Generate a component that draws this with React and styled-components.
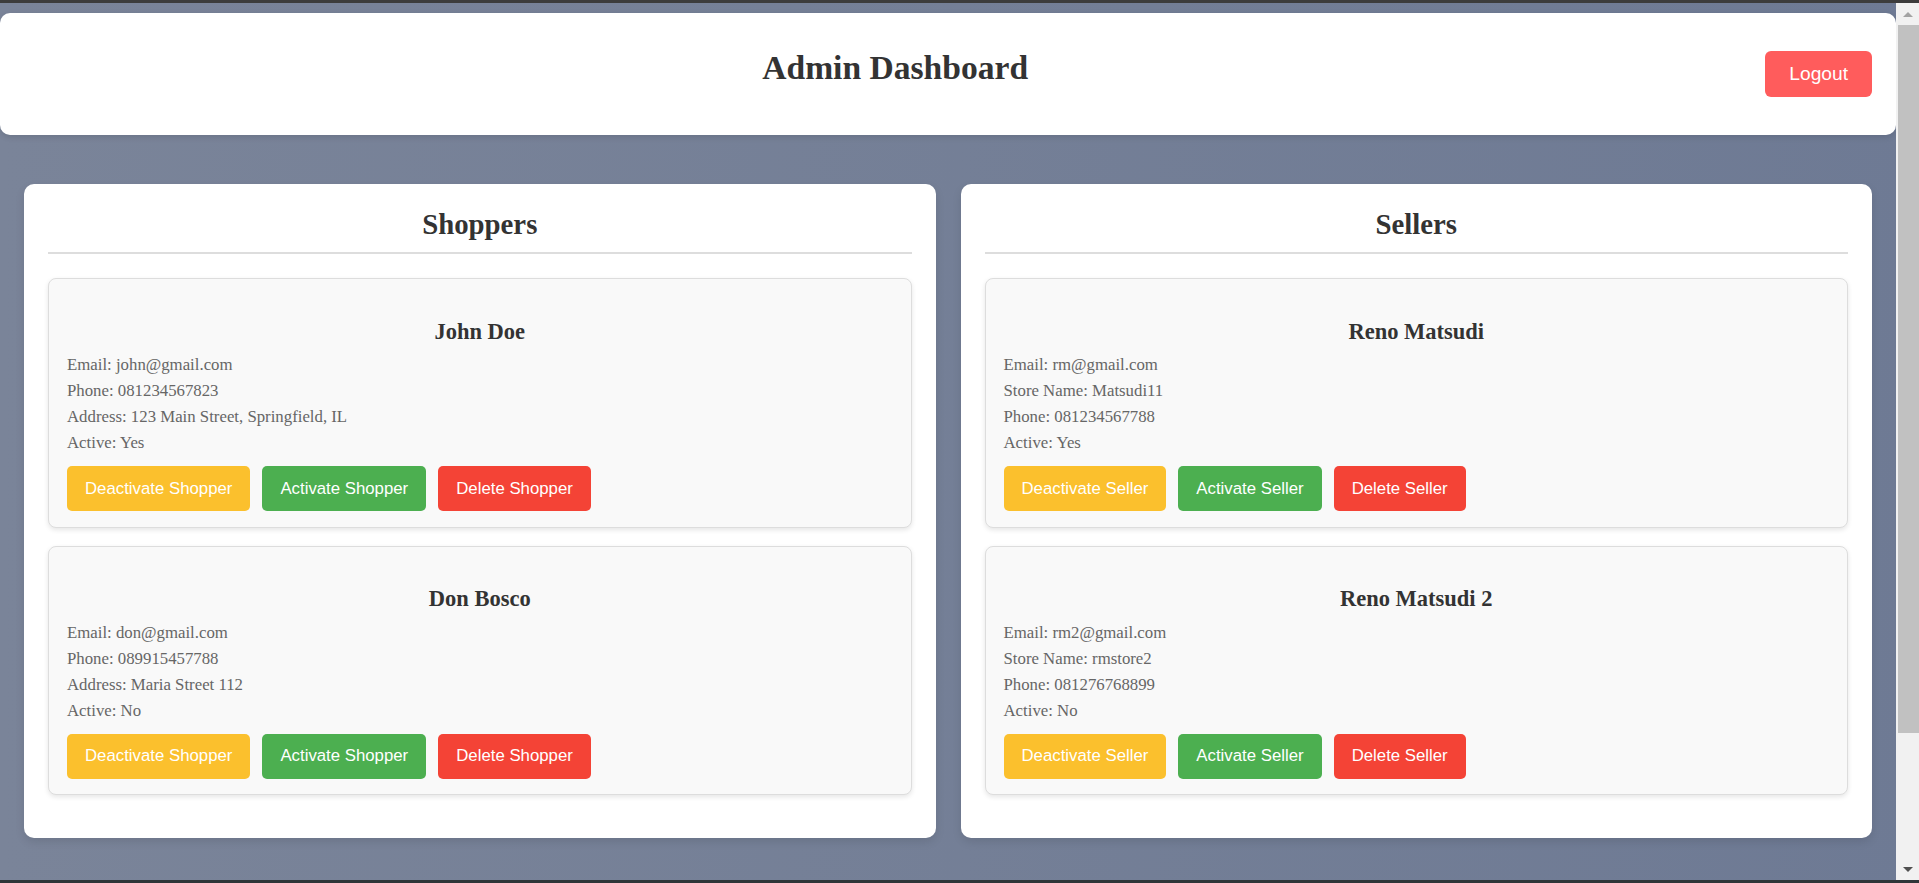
import styled, { createGlobalStyle } from "styled-components";

const GlobalStyle = createGlobalStyle`
  * {
    box-sizing: border-box;
  }

  body {
    margin: 0;
    border-top: 3px solid #3c3c3c;
    font-family: "Liberation Serif", "Times New Roman", serif;
    background: linear-gradient(to right, #7a8499, #6e7a94);
  }
`;

// the browser's own scrollbar is hidden in the capture, so draw the one from the screenshot
const ScrollTrack = styled.div`
  position: fixed;
  top: 3px;
  right: 0;
  bottom: 3px;
  width: 23px;
  display: flex;
  flex-direction: column;
  background: #f1f1f1;
`;

const ScrollArrow = styled.div`
  height: 22px;
  display: flex;
  align-items: center;
  justify-content: center;

  &::before {
    content: "";
    border-left: 5px solid transparent;
    border-right: 5px solid transparent;
    ${(p) =>
      p.$down
        ? "border-top: 5px solid #505050;"
        : "border-bottom: 5px solid #a3a3a3;"}
  }
`;

const ScrollThumb = styled.div`
  height: 708px;
  margin-left: 2px;
  background: #c1c1c1;
`;

const ScrollRest = styled.div`
  flex: 1;
`;

const WindowEdge = styled.div`
  position: fixed;
  left: 0;
  right: 0;
  bottom: 0;
  height: 3px;
  background: #2f3538;
`;

const Page = styled.div`
  min-height: 1060px;
  margin-right: 23px;
  padding-top: 10px;
`;

const Header = styled.header`
  display: flex;
  align-items: center;
  padding: 20px 24px 20px 25px;
  background: white;
  border-radius: 10px;
  box-shadow: 0 2px 6px rgba(0, 0, 0, 0.12);
`;

const Title = styled.h1`
  flex: 1;
  margin: 16px 0 28px;
  text-align: center;
  font-size: 33.6px;
  font-weight: bold;
  color: #333;
`;

const LogoutButton = styled.button`
  padding: 12px 24px;
  border: none;
  border-radius: 6px;
  background-color: #ff5c5c;
  color: white;
  font-family: "Liberation Sans", Arial, sans-serif;
  font-size: 19.2px;
  cursor: pointer;
`;

const Columns = styled.main`
  display: grid;
  grid-template-columns: 1fr 1fr;
  gap: 25px;
  padding: 49px 24px 24px;
`;

const Panel = styled.section`
  padding: 24px 24px 25px;
  background: white;
  border-radius: 10px;
  box-shadow: 0 4px 10px rgba(0, 0, 0, 0.1);
`;

const PanelTitle = styled.h2`
  margin: 0 0 24px;
  padding-bottom: 11px;
  border-bottom: 2px solid #ddd;
  text-align: center;
  font-size: 28.8px;
  color: #333;
`;

const Card = styled.div`
  margin-bottom: 18px;
  padding: 18px 18px 15.5px;
  background: #f9f9f9;
  border: 1px solid #ddd;
  border-radius: 8px;
  box-shadow: 0 2px 5px rgba(0, 0, 0, 0.1);
`;

const Name = styled.h3`
  margin: 21.5px 0 10.5px;
  text-align: center;
  font-size: 22.5px;
  color: #333;
`;

const Info = styled.p`
  margin: 0 0 6px;
  font-size: 16.8px;
  line-height: 20px;
  color: #666;
`;

const Actions = styled.div`
  display: flex;
  gap: 12px;
  margin-top: 13px;
`;

const colors = {
  deactivate: "#fbc02d",
  activate: "#4caf50",
  delete: "#f44336",
};

const ActionButton = styled.button`
  padding: 12.6px 18px;
  border: none;
  border-radius: 5px;
  background-color: ${(p) => colors[p.$kind]};
  color: white;
  font-family: "Liberation Sans", Arial, sans-serif;
  font-size: 16.8px;
  cursor: pointer;
`;

const shoppers = [
  {
    name: "John Doe",
    fields: [
      ["Email", "john@gmail.com"],
      ["Phone", "081234567823"],
      ["Address", "123 Main Street, Springfield, IL"],
      ["Active", "Yes"],
    ],
  },
  {
    name: "Don Bosco",
    fields: [
      ["Email", "don@gmail.com"],
      ["Phone", "089915457788"],
      ["Address", "Maria Street 112"],
      ["Active", "No"],
    ],
  },
];

const sellers = [
  {
    name: "Reno Matsudi",
    fields: [
      ["Email", "rm@gmail.com"],
      ["Store Name", "Matsudi11"],
      ["Phone", "081234567788"],
      ["Active", "Yes"],
    ],
  },
  {
    name: "Reno Matsudi 2",
    fields: [
      ["Email", "rm2@gmail.com"],
      ["Store Name", "rmstore2"],
      ["Phone", "081276768899"],
      ["Active", "No"],
    ],
  },
];

const UserList = ({ title, label, users }) => (
  <Panel>
    <PanelTitle>{title}</PanelTitle>
    {users.map((user) => (
      <Card key={user.name}>
        <Name>{user.name}</Name>
        {user.fields.map(([key, value]) => (
          <Info key={key}>
            {key}: {value}
          </Info>
        ))}
        <Actions>
          <ActionButton $kind="deactivate">Deactivate {label}</ActionButton>
          <ActionButton $kind="activate">Activate {label}</ActionButton>
          <ActionButton $kind="delete">Delete {label}</ActionButton>
        </Actions>
      </Card>
    ))}
  </Panel>
);

const App = () => {
  return (
    <>
      <GlobalStyle />
      <Page>
        <Header>
          <Title>Admin Dashboard</Title>
          <LogoutButton>Logout</LogoutButton>
        </Header>
        <Columns>
          <UserList title="Shoppers" label="Shopper" users={shoppers} />
          <UserList title="Sellers" label="Seller" users={sellers} />
        </Columns>
      </Page>
      <ScrollTrack>
        <ScrollArrow />
        <ScrollThumb />
        <ScrollRest />
        <ScrollArrow $down />
      </ScrollTrack>
      <WindowEdge />
    </>
  );
};

export default App;
